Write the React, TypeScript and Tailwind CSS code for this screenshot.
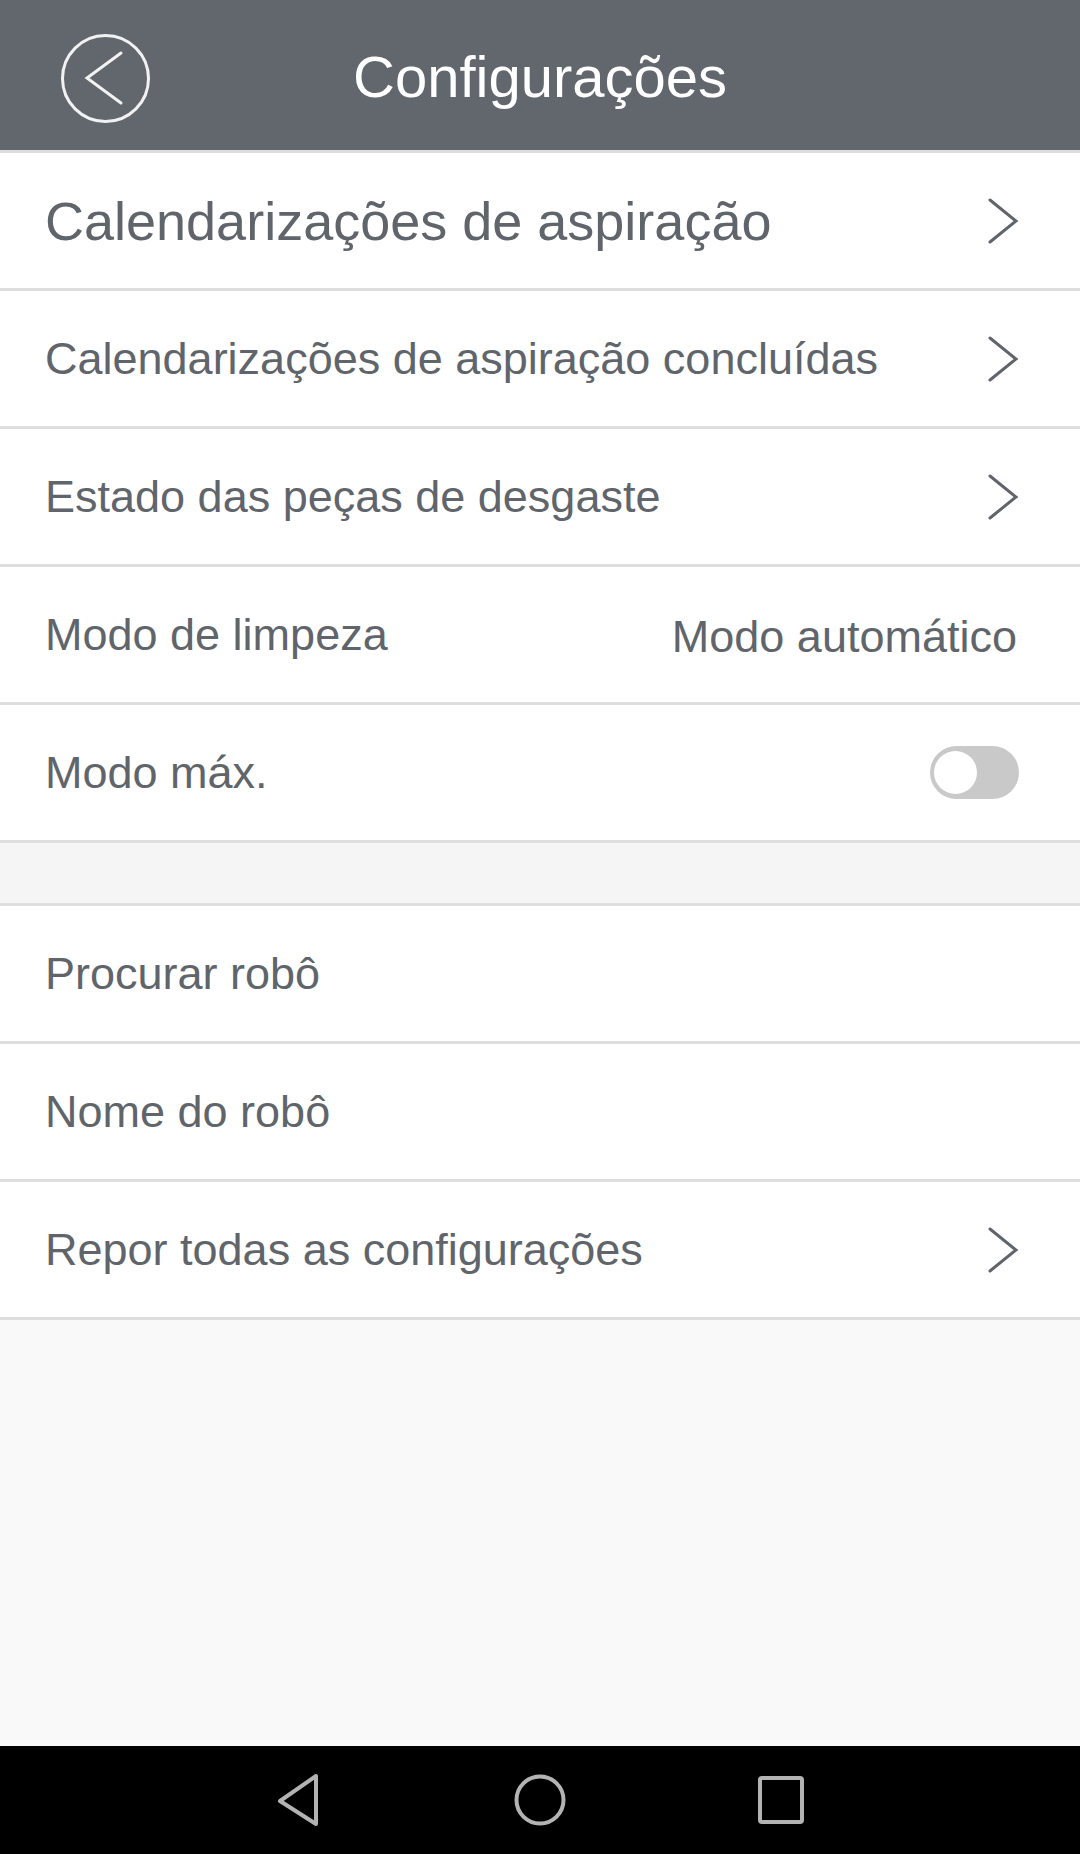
import React from 'react';

const font = { fontFamily: '"Liberation Sans", Arial, sans-serif' };

function Chevron() {
  return (
    <svg width="32" height="46" viewBox="0 0 32 46" className="shrink-0">
      <polyline points="3,2 29,23 3,44" fill="none" stroke="#5f656b" strokeWidth="3" strokeLinecap="round" strokeLinejoin="miter" />
    </svg>
  );
}

function Toggle() {
  return (
    <div className="w-[89px] h-[53px] rounded-full bg-[#c9c9c9] flex items-center pl-[4px]">
      <div className="w-[43px] h-[43px] rounded-full bg-white" />
    </div>
  );
}

function Row({ label, big, right }: { label: string; big?: boolean; right?: React.ReactNode }) {
  return (
    <div className="h-[138px] bg-white border-b-[3px] border-[#dedede] flex items-center justify-between pl-[45px] pr-[61px]">
      <span className={big ? 'text-[54px] text-[#5f656b] leading-none' : 'text-[45px] text-[#5f656b] leading-none'}>{label}</span>
      {right}
    </div>
  );
}

export default function App() {
  return (
    <div className="w-[1080px] h-[1854px] flex flex-col bg-[#f9f9f9]" style={font}>
      <div className="h-[153px] bg-[#62676e] border-b-[3px] border-[#dcdcdc] flex items-center relative shrink-0">
        <div className="absolute left-[60px] top-[33px]">
          <svg width="91" height="91" viewBox="0 0 91 91">
            <circle cx="45.5" cy="45.5" r="43" fill="none" stroke="#f2f2f2" strokeWidth="3" />
            <polyline points="61,20 27,45 61,70" fill="none" stroke="#f2f2f2" strokeWidth="3" strokeLinecap="round" />
          </svg>
        </div>
        <div className="flex-1 text-center text-white text-[58px] leading-none pt-[4px]">Configurações</div>
      </div>

      <Row label="Calendarizações de aspiração" big right={<Chevron />} />
      <Row label="Calendarizações de aspiração concluídas" right={<Chevron />} />
      <Row label="Estado das peças de desgaste" right={<Chevron />} />
      <Row label="Modo de limpeza" right={<span className="text-[45px] text-[#5f656b] leading-none mr-[2px] pt-[3px]">Modo automático</span>} />
      <Row label="Modo máx." right={<Toggle />} />

      <div className="h-[63px] bg-[#f5f5f5] border-b-[3px] border-[#dedede] shrink-0" />

      <Row label="Procurar robô" />
      <Row label="Nome do robô" />
      <Row label="Repor todas as configurações" right={<Chevron />} />

      <div className="flex-1" />

      <div className="h-[108px] bg-black flex items-center justify-center gap-[190px] shrink-0">
        <svg width="48" height="54" viewBox="0 0 48 54">
          <path d="M41 3 L41 51 L5 28 Z" fill="none" stroke="#b3b3b3" strokeWidth="4" strokeLinejoin="round" />
        </svg>
        <svg width="54" height="54" viewBox="0 0 54 54">
          <circle cx="27" cy="27" r="23.5" fill="none" stroke="#b3b3b3" strokeWidth="4" />
        </svg>
        <svg width="48" height="50" viewBox="0 0 48 50">
          <rect x="3" y="3" width="42" height="44" rx="2" fill="none" stroke="#b3b3b3" strokeWidth="4" />
        </svg>
      </div>
    </div>
  );
}
